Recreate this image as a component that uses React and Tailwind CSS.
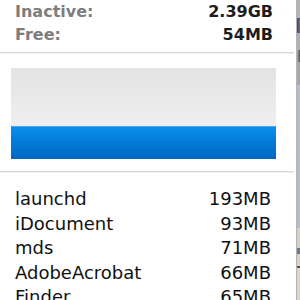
export default function App() {
  const top = [
    ["Inactive:", "2.39GB"],
    ["Free:", "54MB"],
  ];
  const procs = [
    ["launchd", "193MB"],
    ["iDocument", "93MB"],
    ["mds", "71MB"],
    ["AdobeAcrobat", "66MB"],
    ["Finder", "65MB"],
  ];
  return (
    <div className="flex w-[300px] h-[300px] overflow-hidden bg-white">
      <div
        className="w-[296px] shrink-0 flex flex-col bg-white overflow-hidden"
        style={{ fontFamily: '"DejaVu Sans", "Liberation Sans", sans-serif' }}
      >
        <div className="shrink-0 flex flex-col pl-[15px] pr-[23px]">
          {top.map(([k, v]) => (
            <div key={k} className="flex justify-between text-[16px] leading-[23px] font-bold">
              <span className="text-[#7d7d7d]">{k}</span>
              <span className="text-[#1c1c1c]">{v}</span>
            </div>
          ))}
        </div>
        <div className="shrink-0 mt-[6px] mr-[2px] h-px bg-[#d8d8d8]" />
        <div className="shrink-0 mr-[2px] h-px bg-[#f1f1f1]" />
        <div className="shrink-0 mt-[14px] ml-[11px] w-[265px] h-[91px] flex flex-col">
          <div className="shrink-0 h-[58px] bg-gradient-to-b from-[#e3e3e3] to-[#efefef]" />
          <div className="shrink-0 h-px bg-[#45a9ee]" />
          <div className="flex-1 bg-gradient-to-b from-[#0a8eea] to-[#0066c2]" />
        </div>
        <div className="shrink-0 mt-[12px] mr-[2px] h-px bg-[#d8d8d8]" />
        <div className="shrink-0 mr-[2px] h-px bg-[#f1f1f1]" />
        <div className="shrink-0 flex flex-col pt-[14px] pl-[15px] pr-[25px]">
          {procs.map(([k, v]) => (
            <div key={k} className="flex justify-between text-[18px] leading-[24.5px] text-[#111111]">
              <span>{k}</span>
              <span>{v}</span>
            </div>
          ))}
        </div>
      </div>
      <div className="w-px shrink-0 bg-[#b4b4b4]" />
      <div className="flex-1 flex flex-col">
        <div className="shrink-0 h-[18px] bg-[#b3b3b8]" />
        <div className="shrink-0 h-[15px] bg-gradient-to-r from-[#7a2a30] to-[#4a78a8]" />
        <div className="shrink-0 h-[17px] bg-[#b0b0b4]" />
        <div className="shrink-0 h-[12px] bg-gradient-to-r from-[#c8b48c] to-[#4a4a50]" />
        <div className="shrink-0 h-[23px] bg-[#a8a8ac]" />
        <div className="shrink-0 h-[143px] bg-[#b5bccb]" />
        <div className="shrink-0 h-[20px] bg-[#d6d0c2]" />
        <div className="shrink-0 h-[6px] bg-[#6a7890]" />
        <div className="shrink-0 h-[12px] bg-[#d8d2c4]" />
        <div className="shrink-0 h-[2px] bg-[#6a5040]" />
        <div className="flex-1 bg-[#dcd6c8]" />
      </div>
    </div>
  );
}
